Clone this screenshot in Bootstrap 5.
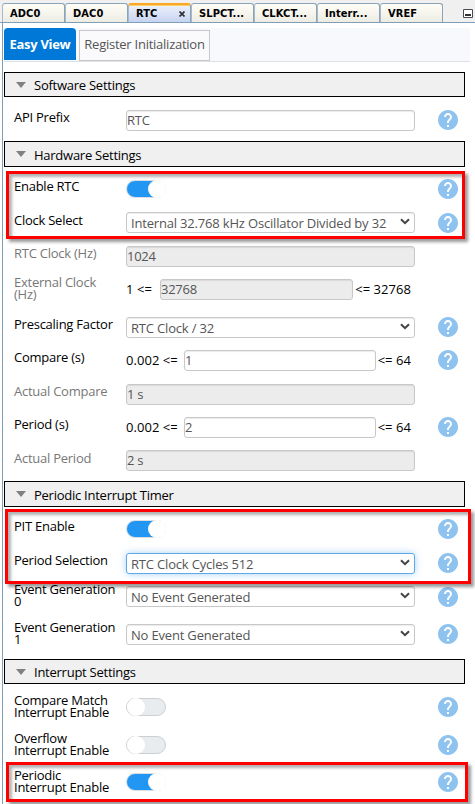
<!DOCTYPE html>
<html lang="en">
<head>
<meta charset="utf-8">
<meta name="viewport" content="width=device-width, initial-scale=1">
<title>RTC - Easy View</title>
<link href="https://cdn.jsdelivr.net/npm/bootstrap@5.3.0/dist/css/bootstrap.min.css" rel="stylesheet">
<style>
body{font-family:"Open Sans","Noto Sans",sans-serif;font-size:13px;letter-spacing:-.25px;color:#000;background:#fff;width:475px;height:804px;overflow:hidden}
.doc-tabs{height:23px;padding:3px 0 0 2px;background:#f0f0f0;border-bottom:1px solid #7f9fb9;font:bold 11px/20px "DejaVu Sans Condensed","DejaVu Sans",sans-serif;letter-spacing:.1px}
.doc-tab{width:63px;flex:none;padding-left:7px;border:1px solid #8ba5b8;border-left-color:#a9bac6;border-bottom:0;border-radius:3px 3px 0 0;background:linear-gradient(#fffdf6,#ecece5);white-space:nowrap;overflow:hidden}
.doc-tab.current{background:linear-gradient(#edf1fb,#c7d4f1);border-top:2px solid #f9a825;line-height:17px;box-shadow:inset 0 1px #ffcf6b}
.doc-tab svg{margin:1px 5px 0 0}
.min-btn{margin:6px 0 0 20px}
.editor{border-left:1px solid #7f9fb9;margin-left:2px;height:781px;padding:5px 0 0 1px}
.view-bar{width:466px;height:34px;background:#f8f9fc;border-bottom:1px solid #dee2e6;margin-bottom:10px}
.view-btn{height:32px;line-height:32px;border-radius:0;padding:0;font-size:inherit}
.view-btn.easy{width:72px;background:#0078d7;color:#fff;border-radius:4px 4px 0 0;font-weight:700;letter-spacing:-.3px}
.view-btn.reg{width:131px;line-height:27px;margin:2px 0 0 3px;height:31px;border:1px solid #c8c8c8;color:#555;background:#fafafc}
.sect{width:461px;height:26px;border:1px solid #000;background:#f0f0f0;padding:3px 0 0 11px;margin-bottom:12px}
.sect.slim{height:25px;margin-bottom:13px}
.sect svg{margin:-3px 8px 0 0}
.setting{padding-left:10px;height:33px}
.h31{height:31px}.h34{height:34px}.h35{height:35px}.h37{height:37px}.h38{height:38px}
.lbl{width:112px;flex:none;line-height:12px;padding-top:1px;white-space:nowrap}
.lbl.low{padding-top:2px}
.lbl.two{padding-top:0;margin-top:-3px}
.off{color:#777}
.ctl{width:289px;flex:none}
.box{height:21px;line-height:19px;padding:0;font-size:13px;color:#555;border:1px solid #c8c8c8;border-radius:3px;box-shadow:inset 0 1px 1px rgba(0,0,0,.08);background:#fff;white-space:nowrap}
.box.ro{background:#ececec}
.box.pick{padding:1px 4px 0;letter-spacing:-.18px}
.box.pick.active-pick{border-color:#5fa8e6;box-shadow:0 0 7px rgba(82,168,236,.5)}
.lim{line-height:21px;letter-spacing:.05px;white-space:nowrap;flex:none}
.lim.max{padding:0 4px 0 2px}
.w34{width:34px}.w58{width:58px}
.help{margin-left:23px;flex:none}
.help.dn{margin-top:1px}
.tog{width:40px;height:18px;border:1px solid #ccd0d4;border-radius:9px;background:#e9ecef;margin-top:1px}
.tog i{display:block;width:18px;height:18px;margin-top:-1px;border-radius:50%;background:#fff}
.tog.on{background:linear-gradient(90deg,#2196f3 29px,#fff 29px);border-color:#d8dee4}
.tog.on i{margin-left:21px}
.hl{border:3px solid #f00;box-shadow:3px 3px 3px rgba(0,0,0,.4),inset 3px 3px 3px rgba(0,0,0,.3);pointer-events:none;z-index:2}
.hl.a{left:2px;top:-8px;width:459px;height:68px}
.hl.b{left:1px;top:-10px;width:466px;height:75px}
.hl.c{left:2px;top:-10px;width:462px;height:40px}
</style>
<script src="https://cdn.jsdelivr.net/npm/bootstrap@5.3.0/dist/js/bootstrap.bundle.min.js"></script>
</head>
<body>
<svg class="d-none">
<symbol id="q" viewBox="2 2 20 20"><path fill="#8fc3ef" d="M12 2C6.48 2 2 6.48 2 12s4.48 10 10 10 10-4.48 10-10S17.52 2 12 2z"/><path fill="#fff" d="M13 19h-2v-2h2v2zm2.07-7.75l-.9.92C13.45 12.9 13 13.5 13 15h-2v-.5c0-1.1.45-2.1 1.17-2.83l1.24-1.26c.37-.36.59-.86.59-1.41 0-1.1-.9-2-2-2s-2 .9-2 2H8c0-2.21 1.79-4 4-4s4 1.79 4 4c0 .88-.36 1.68-.93 2.25z"/></symbol>
<symbol id="dn" viewBox="0 0 10 7"><path d="M1 1.2l4 4 4-4" fill="none" stroke="#444" stroke-width="2"/></symbol>
<symbol id="tri" viewBox="0 0 10 6"><path d="M0 0h10L5 6z" fill="#808080"/></symbol>
</svg>
<nav class="doc-tabs d-flex">
<div class="doc-tab">ADC0</div><div class="doc-tab">DAC0</div>
<div class="doc-tab current d-flex justify-content-between align-items-center">RTC<svg width="6" height="6" viewBox="0 0 6 6"><path d="M.5.5l5 5M5.500.5l-5 5" stroke="#333" stroke-width="1.7"/></svg></div>
<div class="doc-tab">SLPCT...</div><div class="doc-tab">CLKCT...</div><div class="doc-tab">Interr...</div><div class="doc-tab">VREF</div>
<svg class="min-btn" width="11" height="10" viewBox="0 0 11 10"><path d="M.5.5h9v8h-9z" fill="#fff" stroke="#4a4a55"/><path d="M2 5h6v2H2z" fill="#333"/></svg>
</nav>
<main class="editor">
<div class="view-bar d-flex"><div class="btn view-btn easy border-0">Easy View</div><div class="view-btn reg text-center">Register Initialization</div></div>

<div class="sect slim d-flex align-items-center"><svg width="10" height="6"><use href="#tri"/></svg>Software Settings</div>
<div class="setting h31 d-flex align-items-start"><div class="lbl">API Prefix</div><div class="ctl box">RTC</div><svg class="help" width="20" height="20"><use href="#q"/></svg></div>

<div class="sect d-flex align-items-center"><svg width="10" height="6"><use href="#tri"/></svg>Hardware Settings</div>
<div class="position-relative">
<div class="setting d-flex align-items-start"><div class="lbl">Enable RTC</div><div class="ctl"><div class="tog on"><i></i></div></div><svg class="help" width="20" height="20"><use href="#q"/></svg></div>
<div class="setting h34 d-flex align-items-start"><div class="lbl low">Clock Select</div><div class="ctl box pick d-flex justify-content-between">Internal 32.768 kHz Oscillator Divided by 32<svg class="mt-1" width="10" height="7"><use href="#dn"/></svg></div><svg class="help dn" width="20" height="20"><use href="#q"/></svg></div>
<div class="hl a position-absolute"></div>
</div>
<div class="setting d-flex align-items-start"><div class="lbl off">RTC Clock (Hz)</div><div class="ctl box ro">1024</div></div>
<div class="setting h38 d-flex align-items-start"><div class="lbl two off">External Clock<br>(Hz)</div><div class="ctl d-flex"><span class="lim w34">1 &lt;=</span><div class="box ro flex-grow-1">32768</div><span class="lim max">&lt;= 32768</span></div></div>
<div class="setting d-flex align-items-start"><div class="lbl">Prescaling Factor</div><div class="ctl box pick d-flex justify-content-between">RTC Clock / 32<svg class="mt-1" width="10" height="7"><use href="#dn"/></svg></div><svg class="help" width="20" height="20"><use href="#q"/></svg></div>
<div class="setting h34 d-flex align-items-start"><div class="lbl">Compare (s)</div><div class="ctl d-flex"><span class="lim w58">0.002 &lt;=</span><div class="box flex-grow-1">1</div><span class="lim max">&lt;= 64</span></div><svg class="help" width="20" height="20"><use href="#q"/></svg></div>
<div class="setting d-flex align-items-start"><div class="lbl off">Actual Compare</div><div class="ctl box ro">1 s</div></div>
<div class="setting d-flex align-items-start"><div class="lbl">Period (s)</div><div class="ctl d-flex"><span class="lim w58">0.002 &lt;=</span><div class="box flex-grow-1">2</div><span class="lim max">&lt;= 64</span></div><svg class="help" width="20" height="20"><use href="#q"/></svg></div>
<div class="setting h31 d-flex align-items-start"><div class="lbl low off">Actual Period</div><div class="ctl box ro">2 s</div></div>

<div class="sect d-flex align-items-center"><svg width="10" height="6"><use href="#tri"/></svg>Periodic Interrupt Timer</div>
<div class="position-relative">
<div class="setting h34 d-flex align-items-start"><div class="lbl">PIT Enable</div><div class="ctl"><div class="tog on"><i></i></div></div><svg class="help" width="20" height="20"><use href="#q"/></svg></div>
<div class="setting d-flex align-items-start"><div class="lbl">Period Selection</div><div class="ctl box pick active-pick d-flex justify-content-between">RTC Clock Cycles 512<svg class="mt-1" width="10" height="7"><use href="#dn"/></svg></div><svg class="help" width="20" height="20"><use href="#q"/></svg></div>
<div class="hl b position-absolute"></div>
</div>
<div class="setting h38 d-flex align-items-start"><div class="lbl two">Event Generation<br>0</div><div class="ctl box pick d-flex justify-content-between">No Event Generated<svg class="mt-1" width="10" height="7"><use href="#dn"/></svg></div><svg class="help dn" width="20" height="20"><use href="#q"/></svg></div>
<div class="setting h35 d-flex align-items-start"><div class="lbl two">Event Generation<br>1</div><div class="ctl box pick d-flex justify-content-between">No Event Generated<svg class="mt-1" width="10" height="7"><use href="#dn"/></svg></div><svg class="help" width="20" height="20"><use href="#q"/></svg></div>

<div class="sect slim d-flex align-items-center"><svg width="10" height="6"><use href="#tri"/></svg>Interrupt Settings</div>
<div class="setting h38 d-flex align-items-start"><div class="lbl two">Compare Match<br>Interrupt Enable</div><div class="ctl"><div class="tog"><i></i></div></div><svg class="help" width="20" height="20"><use href="#q"/></svg></div>
<div class="setting h37 d-flex align-items-start"><div class="lbl two">Overflow<br>Interrupt Enable</div><div class="ctl"><div class="tog"><i></i></div></div><svg class="help" width="20" height="20"><use href="#q"/></svg></div>
<div class="position-relative">
<div class="setting d-flex align-items-start"><div class="lbl two">Periodic<br>Interrupt Enable</div><div class="ctl"><div class="tog on"><i></i></div></div><svg class="help" width="20" height="20"><use href="#q"/></svg></div>
<div class="hl c position-absolute"></div>
</div>
</main>
</body>
</html>
